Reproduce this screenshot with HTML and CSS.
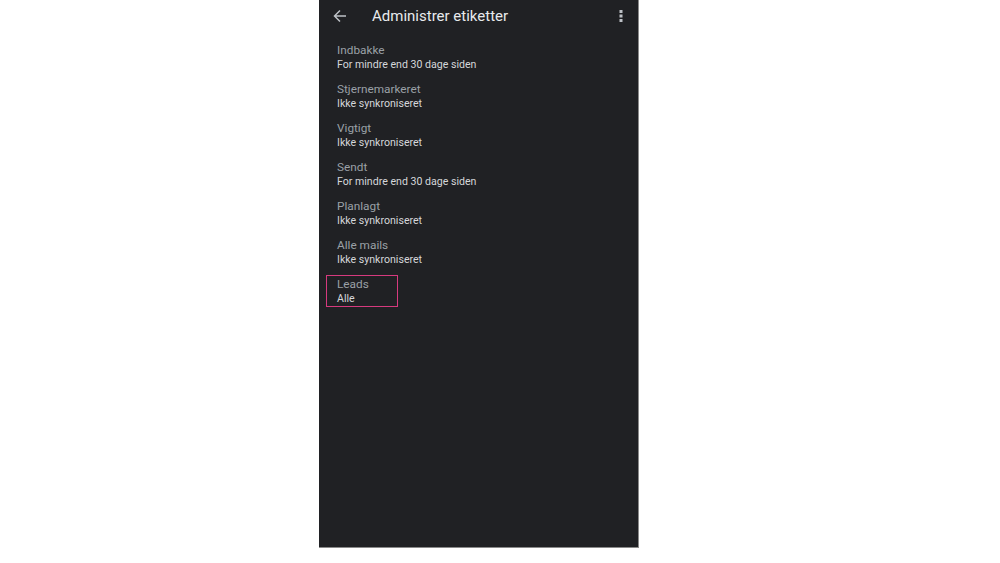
FILE: index.html
```html
<!DOCTYPE html>
<html lang="da">
<head>
<meta charset="utf-8">
<title>Administrer etiketter</title>
<link rel="stylesheet" href="styles.css">
</head>
<body>
<div class="stage">
  <div class="phone">
    <header class="appbar">
      <svg class="back" width="14" height="14" viewBox="0 0 14 14"><path d="M13 7H2M7 1.5L1.5 7 7 12.5" fill="none" stroke="#bdc1c6" stroke-width="1.5"/></svg>
      <h1 class="title">Administrer etiketter</h1>
      <svg class="more" width="4" height="12" viewBox="0 0 4 12"><rect x="0.5" y="0" width="3" height="3" fill="#bdc1c6"/><rect x="0.5" y="4.5" width="3" height="3" fill="#bdc1c6"/><rect x="0.5" y="9" width="3" height="3" fill="#bdc1c6"/></svg>
    </header>
    <ul class="list">
      <li class="item"><span class="name">Indbakke</span><span class="sub">For mindre end 30 dage siden</span></li>
      <li class="item"><span class="name">Stjernemarkeret</span><span class="sub">Ikke synkroniseret</span></li>
      <li class="item"><span class="name">Vigtigt</span><span class="sub">Ikke synkroniseret</span></li>
      <li class="item"><span class="name">Sendt</span><span class="sub">For mindre end 30 dage siden</span></li>
      <li class="item"><span class="name">Planlagt</span><span class="sub">Ikke synkroniseret</span></li>
      <li class="item"><span class="name">Alle mails</span><span class="sub">Ikke synkroniseret</span></li>
      <li class="item highlight"><span class="name">Leads</span><span class="sub">Alle</span></li>
    </ul>
  </div>
</div>
</body>
</html>
```
FILE: styles.css
```css
html, body {
  margin: 0;
  padding: 0;
  background: #ffffff;
  font-family: Roboto, "Liberation Sans", sans-serif;
}
.stage {
  width: 1000px;
  height: 563px;
  display: flex;
  justify-content: flex-start;
}
.phone {
  margin-left: 319px;
  width: 319px;
  height: 547px;
  background: #202124;
  border-right: 1px solid #8a8a8a;
  border-bottom: 1px solid #8a8a8a;
  display: flex;
  flex-direction: column;
}
.appbar {
  height: 32px;
  display: flex;
  align-items: center;
  padding: 0 0 0 14px;
}
.back {
  flex: none;
}
.title {
  margin: 0 0 0 25px;
  font-size: 15px;
  font-weight: 400;
  color: #e8eaed;
  flex: 1;
}
.more {
  margin-right: 15px;
  flex: none;
}
.list {
  list-style: none;
  margin: 0;
  padding: 9px 0 0 7px;
  display: flex;
  flex-direction: column;
  gap: 7px;
}
.item {
  display: flex;
  flex-direction: column;
  padding: 0 10px 1px 10px;
  width: fit-content;
  border: 1px solid transparent;
}
.name {
  font-size: 11.8px;
  line-height: 16px;
  color: #9aa0a6;
}
.sub {
  font-size: 10.6px;
  line-height: 13px;
  color: #d5d7da;
}
.highlight {
  border-color: #d63a7e;
  width: 50px;
}
```
